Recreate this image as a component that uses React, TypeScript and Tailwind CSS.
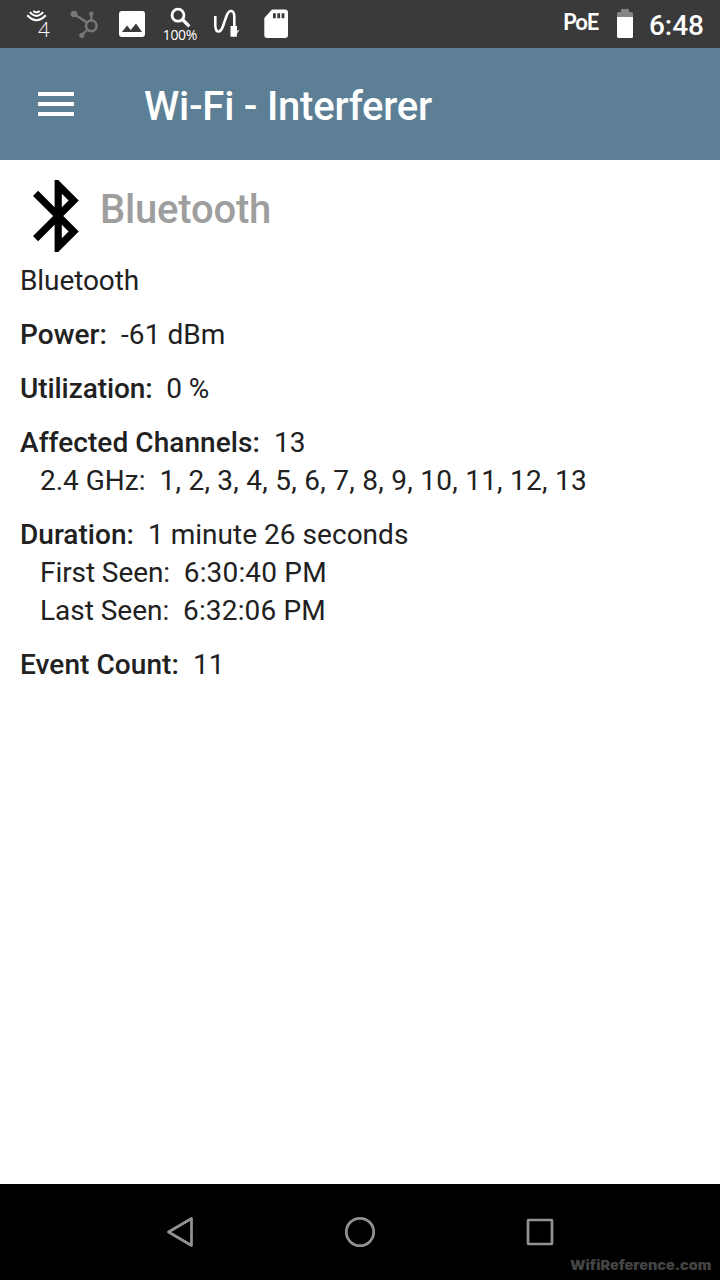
import type { ReactNode } from 'react';

interface DetailProps {
  label: string;
  value: string;
  className?: string;
  children?: ReactNode;
}

function Detail({ label, value, className, children }: DetailProps) {
  return (
    <div>
      <p className={`whitespace-pre ${className ?? ''}`}>
        <span className="font-medium">{label}:</span>
        {'  '}
        {value}
      </p>
      {children && <div className="pl-5 whitespace-pre">{children}</div>}
    </div>
  );
}

function StatusBar() {
  return (
    <div className="h-12 shrink-0 bg-[#3a3a3a] flex items-center justify-between text-white">
      <div className="flex items-center h-12 pl-5">
        <svg width="40" height="48" viewBox="20 0 40 48" fill="none" stroke="white">
          <path d="M27.3 15.3Q36.5 25.3 45.7 15.3" strokeWidth="2.1" />
          <path d="M29.8 12.2Q36.5 19.8 43.2 12.2" strokeWidth="1.9" />
          <path d="M33.3 11Q36.5 13.8 39.7 11" strokeWidth="1.8" />
          <text x="38" y="36.5" fontSize="20.5" fontWeight="300" fill="white" stroke="none" className="font-['Open_Sans',sans-serif]">4</text>
        </svg>
        <svg width="48" height="48" viewBox="60 0 48 48" fill="#777777" stroke="#777777">
          <circle cx="74" cy="14" r="3.3" stroke="none" />
          <circle cx="91.3" cy="13.8" r="2.3" stroke="none" />
          <circle cx="81.8" cy="35.3" r="2.6" stroke="none" />
          <path d="M74 14L87 22.5M91.3 14V20M87.5 29.5L82 35" strokeWidth="2.2" />
          <circle cx="91.3" cy="25.8" r="5.3" fill="none" strokeWidth="2.6" />
        </svg>
        <svg width="48" height="48" viewBox="108 0 48 48" fill="white">
          <path fillRule="evenodd" d="M122 11H142.5Q145 11 145 14V34Q145 37 142 37H122Q119 37 119 34V14Q119 11 122 11ZM122 32H142L136 23.5L130.8 30L127 25.5Z" />
        </svg>
        <svg width="48" height="48" viewBox="156 0 48 48" fill="none" stroke="white">
          <circle cx="178" cy="15.2" r="6" strokeWidth="2.8" />
          <path d="M182.5 19.5L189.3 26.3" strokeWidth="3.2" />
          <text x="180" y="40" textAnchor="middle" fontSize="14" fill="white" stroke="none" textLength="34.5" className="font-['Open_Sans',sans-serif]">100%</text>
        </svg>
        <svg width="48" height="48" viewBox="204 0 48 48" fill="none" stroke="white">
          <path d="M215.3 16V25C215.3 33.5 220.5 33.5 223 26L226.5 16C229.5 8.5 234.3 10 234.3 17V27" strokeWidth="2.6" />
          <path d="M230.5 26H237V31L239.5 29.5L236.8 34V36.7H230.5Z" fill="white" stroke="none" />
        </svg>
        <svg width="40" height="48" viewBox="252 0 40 48">
          <path d="M272 9.5H285Q288 9.5 288 12.5V35Q288 38 285 38H267Q264.3 38 264.3 35V18Z" fill="white" />
          <path d="M273 13.2h2.8v5h-2.8zM277.3 13.2h2.8v5h-2.8zM281.6 13.2h2.8v5h-2.8z" fill="#3a3a3a" />
        </svg>
      </div>
      <div className="flex items-center h-12 pr-4">
        <span className="font-['Lato',sans-serif] font-bold text-[22px] leading-none w-[37px] -mt-1 tracking-[-0.7px]">PoE</span>
        <svg className="ml-[17px]" width="16" height="48" viewBox="617 0 16 48">
          <path d="M617 17V13.5Q617 12 618.5 12H621V9H629V12H631.5Q633 12 633 13.5V17Z" fill="#858585" />
          <path d="M617 17H633V36.5Q633 38 631.5 38H618.5Q617 38 617 36.5Z" fill="white" />
        </svg>
        <span className="ml-4 mt-[3px] text-[28px] font-medium leading-none">6:48</span>
      </div>
    </div>
  );
}

function AppBar() {
  return (
    <header className="h-28 shrink-0 bg-[#5c7f95] flex items-center pl-[38px] text-white">
      <button type="button" aria-label="Menu" className="flex flex-col gap-1.5">
        <span className="block w-9 h-1 bg-white" />
        <span className="block w-9 h-1 bg-white" />
        <span className="block w-9 h-1 bg-white" />
      </button>
      <h1 className="ml-[70px] mt-1.5 text-[40px] leading-none font-medium tracking-[-0.22px]">Wi-Fi - Interferer</h1>
    </header>
  );
}

function NavBar() {
  return (
    <nav className="relative h-24 shrink-0 bg-black flex items-center justify-center gap-[140px]">
      <svg width="40" height="40" viewBox="0 0 40 40" fill="none" stroke="#929292" strokeWidth="2.7" strokeLinejoin="round">
        <path d="M31.5 6.5V33.5L8.5 20Z" />
      </svg>
      <svg width="40" height="40" viewBox="0 0 40 40" fill="none" stroke="#929292" strokeWidth="2.7">
        <circle cx="20" cy="20" r="13.7" />
      </svg>
      <svg width="40" height="40" viewBox="0 0 40 40" fill="none" stroke="#929292" strokeWidth="2.7">
        <rect x="8" y="8" width="24" height="24" rx="0.8" />
      </svg>
      <span className="absolute right-[9px] bottom-2 origin-right scale-x-[1.11] font-['Inter',sans-serif] font-black text-[13px] leading-none text-[#444444]">
        WifiReference.com
      </span>
    </nav>
  );
}

export default function App() {
  return (
    <div className="w-[720px] h-[1280px] flex flex-col bg-white font-[Roboto,sans-serif] overflow-hidden">
      <StatusBar />
      <AppBar />
      <main className="flex-1 px-5 pt-5 text-[#212121] text-[28px] leading-[38px]">
        <div className="flex items-start h-[72px] pl-[13px] mb-2.5">
          <svg width="46" height="72" viewBox="5 2 12.78 20" fill="black">
            <path d="M17.71 7.71L12 2h-1v7.59L6.41 5 5 6.41 10.59 12 5 17.59 6.41 19 11 14.41V22h1l5.71-5.71-4.3-4.29 4.3-4.29zM13 5.83l1.88 1.88L13 9.59V5.83zm1.88 10.46L13 18.17v-3.76l1.88 1.88z" />
          </svg>
          <h2 className="ml-[21px] mt-2.5 text-[40px] leading-10 font-medium tracking-[-0.2px] text-[#9e9e9e]">Bluetooth</h2>
        </div>
        <div className="flex flex-col gap-4">
          <p className="tracking-[-0.1px]">Bluetooth</p>
          <Detail label="Power" value="-61 dBm" className="tracking-[0.06px]" />
          <Detail label="Utilization" value="0 %" className="tracking-[-0.08px]" />
          <Detail label="Affected Channels" value="13" className="tracking-[0.07px]">
            <p>
              {'2.4 GHz:  '}
              <span className="tracking-[0.26px]">1, 2, 3, 4, 5, 6, 7, 8, 9, 10, 11, 12, 13</span>
            </p>
          </Detail>
          <Detail label="Duration" value="1 minute 26 seconds" className="tracking-[0.03px]">
            <p>
              <span className="tracking-[-0.08px]">{'First Seen:  '}</span>
              <span className="tracking-[0.17px]">6:30:40 PM</span>
            </p>
            <p>
              <span className="tracking-[-0.03px]">{'Last Seen:  '}</span>
              <span className="tracking-[0.17px]">6:32:06 PM</span>
            </p>
          </Detail>
          <Detail label="Event Count" value="11" className="tracking-[0.07px]" />
        </div>
      </main>
      <NavBar />
    </div>
  );
}
